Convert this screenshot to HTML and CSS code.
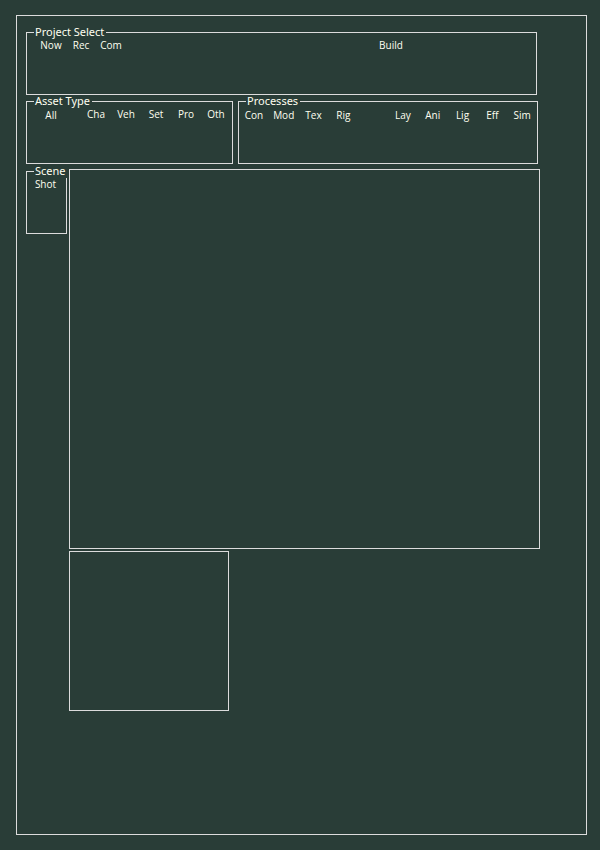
FILE: index.html
```html
<!DOCTYPE html>
<html lang="en">
<head>
<meta charset="utf-8">
<title>Project Select</title>
<link rel="stylesheet" href="styles.css">
</head>
<body>
<main class="frame">
  <fieldset class="group project">
    <legend>Project Select</legend>
    <div class="labels project-labels">
      <span>Now</span><span>Rec</span><span>Com</span><span class="build">Build</span>
    </div>
  </fieldset>
  <div class="filters">
    <fieldset class="group">
      <legend>Asset Type</legend>
      <div class="labels asset-labels">
        <span class="all">All</span><span>Cha</span><span>Veh</span><span>Set</span><span>Pro</span><span>Oth</span>
      </div>
    </fieldset>
    <fieldset class="group">
      <legend>Processes</legend>
      <div class="labels process-labels">
        <span>Con</span><span>Mod</span><span>Tex</span><span>Rig</span><span class="lay">Lay</span><span>Ani</span><span>Lig</span><span>Eff</span><span>Sim</span>
      </div>
    </fieldset>
  </div>
  <div class="workspace">
    <fieldset class="group scene">
      <legend>Scene</legend>
      <div class="labels scene-labels"><span>Shot</span></div>
    </fieldset>
    <div class="panels">
      <section class="panel list" aria-label="Items"></section>
      <section class="panel preview" aria-label="Preview"></section>
    </div>
  </div>
</main>
</body>
</html>
```
FILE: styles.css
```css
* {
  box-sizing: border-box;
}

body {
  margin: 0;
  padding: 15px 13px 15px 16px;
  min-height: 100vh;
  display: flex;
  background: #293d37;
  color: #fffff0;
  font: 10px/12px "Open Sans", "Noto Sans", sans-serif;
}

.frame {
  flex: 1;
  border: 1px solid #dcdcdc;
  padding: 10px 46px 10px 9px;
}

.group {
  min-width: 0;
  height: 69px;
  margin: 0;
  padding: 0;
  border: 1px solid #dcdcdc;
}

.group legend {
  margin-left: 7px;
  padding: 0 2px 2px 1px;
  background: #293d37;
  font-family: "Noto Sans", "Open Sans", sans-serif;
  font-size: 11px;
  line-height: 11px;
  white-space: nowrap;
}

.labels {
  display: grid;
  text-align: center;
}

.project {
  margin-right: 3px;
}

.project-labels {
  grid-template-columns: 30px 30px 30px 1fr 30px;
  padding: 0 130px 0 9px;
}

.build {
  grid-column: 5;
}

.filters {
  display: grid;
  grid-template-columns: 207fr 300fr;
  gap: 5px;
  margin-right: 2px;
}

.asset-labels {
  grid-template-columns: 30px 1fr repeat(5, 30px);
  padding: 0 1px 0 9px;
}

.all {
  padding-top: 1px;
}

.asset-labels span:nth-child(2) {
  grid-column: 3;
}

.process-labels {
  grid-template-columns: repeat(10, 1fr);
  padding-top: 1px;
}

.lay {
  grid-column: 6;
}

.workspace {
  display: grid;
  grid-template-columns: 41px 1fr;
  gap: 2px;
  padding-top: 1px;
}

.scene-labels {
  padding-right: 2px;
}

.panels {
  display: grid;
  gap: 2px;
  padding-top: 4px;
}

.panel {
  border: 1px solid #dcdcdc;
}

.list {
  height: 380px;
}

.preview {
  width: 160px;
  height: 160px;
}
```
